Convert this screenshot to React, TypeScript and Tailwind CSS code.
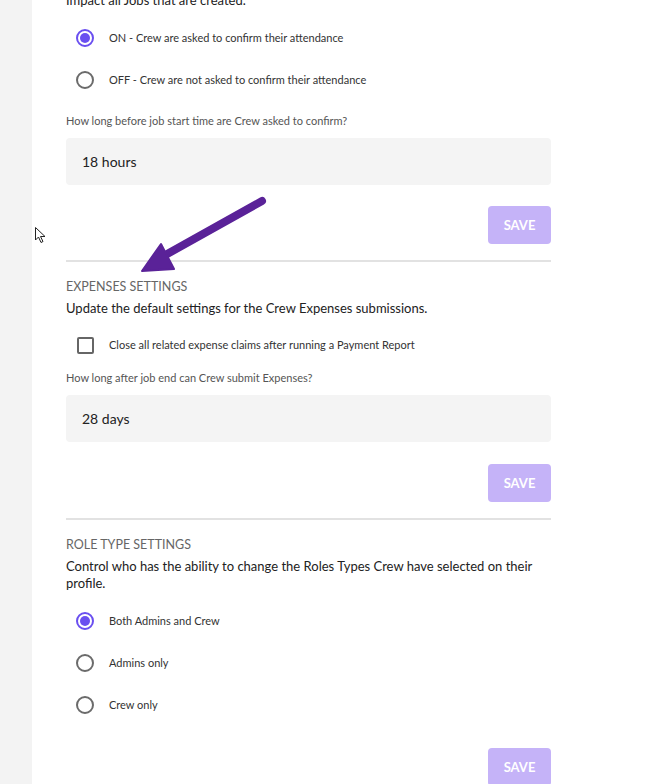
import { ReactNode } from "react";

const font = { fontFamily: "Lato, 'Liberation Sans', sans-serif" };

function Radio({ checked, label }: { checked?: boolean; label: string }) {
  return (
    <div className="flex h-[42px] items-center pl-[10px]">
      {checked ? (
        <span className="flex h-[18px] w-[18px] items-center justify-center rounded-full border-2 border-[#6a4ff0]">
          <span className="h-[10px] w-[10px] rounded-full bg-[#6a4ff0]" />
        </span>
      ) : (
        <span className="h-[18px] w-[18px] rounded-full border-2 border-[#6b6b6b]" />
      )}
      <span className="ml-[15px] text-[11px] text-[#333]">{label}</span>
    </div>
  );
}

function Field({ label, value }: { label: string; value: string }) {
  return (
    <>
      <p className="text-[11px] leading-4 text-[#555]">{label}</p>
      <div className="mt-[9px] flex h-[47px] items-center rounded-sm bg-[#f4f4f4] px-4 text-[14px] text-[#222]">
        {value}
      </div>
    </>
  );
}

function SaveButton({ className }: { className?: string }) {
  return (
    <div className={`flex justify-end ${className ?? ""}`}>
      <button className="h-[38px] w-[63px] rounded-[4px] bg-[#c5b3f8] pt-px text-[13px] font-bold text-white">
        SAVE
      </button>
    </div>
  );
}

function Section({ title, children }: { title: string; children: ReactNode }) {
  return (
    <section>
      <h2 className="text-[12.5px] leading-[18px] text-[#666]">{title}</h2>
      {children}
    </section>
  );
}

function Divider({ className }: { className?: string }) {
  return <hr className={`border-0 border-t-2 border-[#e2e2e2] ${className ?? ""}`} />;
}

export default function App() {
  return (
    <div className="relative flex h-[784px] overflow-hidden bg-white" style={font}>
      <aside className="w-[32px] shrink-0 bg-[#f3f3f3]" />

      <main className="box-content w-[485px] pl-[34px]">
        <p className="-mt-[10px] text-[13px] leading-5 text-[#222]">
          Impact all Jobs that are created.
        </p>
        <div className="mt-[7px]">
          <Radio checked label="ON - Crew are asked to confirm their attendance" />
          <Radio label="OFF - Crew are not asked to confirm their attendance" />
        </div>
        <div className="mt-[12px]">
          <Field label="How long before job start time are Crew asked to confirm?" value="18 hours" />
        </div>
        <SaveButton className="mt-[21px]" />
        <Divider className="mt-[16px]" />

        <div className="mt-[16px]">
          <Section title="EXPENSES SETTINGS">
            <p className="mt-[2px] text-[13px] leading-5 text-[#222]">
              Update the default settings for the Crew Expenses submissions.
            </p>
            <div className="mt-[9px] flex h-[36px] items-center pl-[11px]">
              <span className="h-[17px] w-[17px] rounded-[2px] border-2 border-[#666]" />
              <span className="ml-[15px] text-[11px] text-[#333]">
                Close all related expense claims after running a Payment Report
              </span>
            </div>
            <div className="mt-[7px]">
              <Field label="How long after job end can Crew submit Expenses?" value="28 days" />
            </div>
            <SaveButton className="mt-[22px]" />
          </Section>
        </div>
        <Divider className="mt-[16px]" />

        <div className="mt-[16px]">
          <Section title="ROLE TYPE SETTINGS">
            <p className="mt-[4px] text-[13px] leading-[17px] text-[#222]">
              Control who has the ability to change the Roles Types Crew have selected on their
              profile.
            </p>
            <div className="mt-[8px]">
              <Radio checked label="Both Admins and Crew" />
              <Radio label="Admins only" />
              <Radio label="Crew only" />
            </div>
            <SaveButton className="mt-[22px]" />
          </Section>
        </div>
      </main>

      {/* annotation arrow drawn over the page */}
      <svg className="pointer-events-none absolute left-0 top-0" width="670" height="784">
        <line x1="262" y1="201" x2="160" y2="258" stroke="#5a2298" strokeWidth="8" strokeLinecap="round" />
        <polygon points="142,271 161,244 174,269" fill="#5a2298" stroke="#5a2298" strokeWidth="2" strokeLinejoin="round" />
      </svg>

      {/* mouse pointer */}
      <svg className="pointer-events-none absolute left-[35px] top-[227px]" width="12" height="18" viewBox="0 0 12 18">
        <path d="M0.5 0.5 L0.5 13 L3.5 10 L6 15.5 L8 14.5 L5.5 9.5 L10 9.5 Z" fill="#fff" stroke="#222" strokeWidth="1" />
      </svg>
    </div>
  );
}
